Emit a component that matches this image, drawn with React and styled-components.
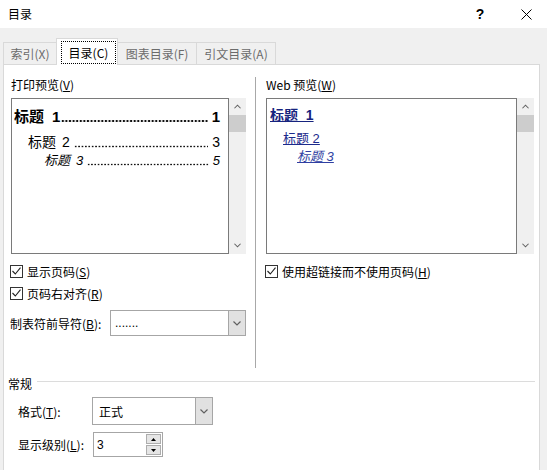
import React from "react";
import styled, { createGlobalStyle } from "styled-components";

const GlobalStyle = createGlobalStyle`
  html, body {
    margin: 0;
    padding: 0;
    background: #f0f0f0;
  }
  body {
    font-family: "Noto Sans CJK SC", "Liberation Sans", sans-serif;
    font-size: 12px;
    color: #000;
  }
`;

const Window = styled.div`
  width: 547px;
  height: 470px;
  overflow: hidden;
  background: #f0f0f0;
`;

const TitleBar = styled.div`
  height: 28px;
  background: #fff;
  display: flex;
  align-items: center;
  padding-left: 8px;
`;

const TitleText = styled.span`
  flex: 1;
  font-size: 12px;
  line-height: 16px;
`;

const TitleButton = styled.div`
  width: 40px;
  height: 28px;
  display: flex;
  align-items: center;
  justify-content: center;
  font-family: "Liberation Sans", sans-serif;
  font-weight: 700;
  font-size: 14px;
  margin-right: ${(p) => p.$gap || 0}px;
`;

const TabStrip = styled.div`
  height: 36px;
  display: flex;
  align-items: flex-end;
  padding-left: 3px;
`;

const Tab = styled.div`
  position: relative;
  z-index: ${(p) => (p.$active ? 2 : 1)};
  width: ${(p) => p.$w}px;
  height: ${(p) => (p.$active ? 27 : 22)}px;
  margin-left: -1px;
  margin-bottom: ${(p) => (p.$active ? -1 : 0)}px;
  box-sizing: border-box;
  border: 1px solid #d9d9d9;
  border-bottom: none;
  background: ${(p) => (p.$active ? "#fff" : "#f0f0f0")};
  color: ${(p) => (p.$active ? "#000" : "#6b6b6b")};
  display: flex;
  align-items: center;
  justify-content: center;
  padding: ${(p) => (p.$active ? "2px 1px 1px 4px" : "0")};
  &:first-child {
    margin-left: 0;
  }
`;

const FocusBox = styled.div`
  flex: 1;
  align-self: stretch;
  display: flex;
  align-items: center;
  justify-content: center;
  border: 1px dotted #000;
`;

const Panel = styled.div`
  margin-left: 3px;
  width: 537px;
  height: 420px;
  box-sizing: border-box;
  border: 1px solid #d9d9d9;
  background: #fff;
`;

const TopRow = styled.div`
  display: flex;
  padding: 12px 0 0 7px;
`;

const Column = styled.div`
  width: ${(p) => p.$w}px;
  margin-left: ${(p) => p.$ml || 0}px;
  display: flex;
  flex-direction: column;
`;

const Label = styled.div`
  height: 16px;
  line-height: 16px;
  margin-bottom: 5px;
  white-space: nowrap;
`;

const VDivider = styled.div`
  margin-left: 9px;
  width: 1px;
  height: 291px;
  background: #a8a8a8;
`;

const PreviewFrame = styled.div`
  display: flex;
  height: 156px;
`;

const ListBox = styled.div`
  width: ${(p) => p.$w}px;
  box-sizing: border-box;
  border: 1px solid #7a7a7a;
  background: #fff;
  padding: ${(p) => p.$pad};
  overflow: hidden;
`;

const ScrollTrack = styled.div`
  width: 17px;
  background: #f0f0f0;
  display: flex;
  flex-direction: column;
`;

const ScrollArrow = styled.div`
  height: 17px;
  display: flex;
  align-items: center;
  justify-content: center;
`;

const ScrollThumb = styled.div`
  height: 17px;
  background: #cdcdcd;
`;

const ScrollRest = styled.div`
  flex: 1;
`;

const TocLine = styled.div`
  display: flex;
  align-items: center;
  padding-left: ${(p) => p.$indent}px;
  margin-top: ${(p) => p.$mt || 0}px;
  height: ${(p) => p.$h}px;
  line-height: ${(p) => p.$h}px;
  font-size: ${(p) => p.$size}px;
  font-weight: ${(p) => (p.$bold ? 700 : 400)};
  font-style: ${(p) => (p.$italic ? "italic" : "normal")};
  font-family: "Liberation Sans", "Noto Sans CJK SC", sans-serif;
  white-space: nowrap;
`;

const HeadNum = styled.span`
  margin-left: ${(p) => p.$gap}px;
`;

const Leader = styled.span`
  flex: 1;
  align-self: flex-end;
  height: ${(p) => p.$dot * 2}px;
  margin: 0 4px ${(p) => p.$base}px ${(p) => p.$gap}px;
  background-image: radial-gradient(
    circle at center,
    #111 ${(p) => p.$dot * 0.55}px,
    transparent ${(p) => p.$dot * 0.75}px
  );
  background-size: ${(p) => p.$step}px ${(p) => p.$dot * 2}px;
  background-repeat: repeat-x;
`;

const WebLink = styled.div`
  padding-left: ${(p) => p.$indent}px;
  margin-top: ${(p) => p.$mt || 0}px;
  height: ${(p) => p.$h}px;
  line-height: ${(p) => p.$h}px;
  font-size: ${(p) => p.$size}px;
  font-weight: ${(p) => (p.$bold ? 700 : 400)};
  font-style: ${(p) => (p.$italic ? "italic" : "normal")};
  font-family: "Liberation Sans", "Noto Sans CJK SC", sans-serif;
  color: ${(p) => p.$color};
  text-decoration: underline;
  white-space: nowrap;
`;

const CheckRow = styled.div`
  display: flex;
  align-items: center;
  height: 18px;
  margin-top: ${(p) => p.$mt}px;
  margin-left: -1px;
  white-space: nowrap;
`;

const CheckBox = styled.span`
  width: 13px;
  height: 13px;
  box-sizing: border-box;
  border: 1px solid #333;
  background: #fff;
  margin-right: 4px;
  display: flex;
  align-items: center;
  justify-content: center;
`;

const FieldRow = styled.div`
  display: flex;
  align-items: center;
  margin-top: ${(p) => p.$mt}px;
  margin-left: ${(p) => p.$ml || 0}px;
  white-space: nowrap;
`;

const FieldLabel = styled.span`
  width: ${(p) => p.$w}px;
  flex-shrink: 0;
`;

const Combo = styled.div`
  width: ${(p) => p.$w}px;
  height: ${(p) => p.$h}px;
  box-sizing: border-box;
  border: 1px solid #a6a6a6;
  background: #fff;
  display: flex;
`;

const ComboValue = styled.div`
  flex: 1;
  display: flex;
  align-items: center;
  padding-left: ${(p) => p.$pl || 4}px;
  font-family: "Liberation Sans", "Noto Sans CJK SC", sans-serif;
  font-size: ${(p) => p.$size || 12}px;
`;

const ComboButton = styled.div`
  width: 17px;
  box-sizing: border-box;
  border-left: 1px solid #a6a6a6;
  background: #e1e1e1;
  display: flex;
  align-items: center;
  justify-content: center;
`;

const SpinButtons = styled.div`
  width: 15px;
  display: flex;
  flex-direction: column;
  padding: 1px 1px 1px 0;
  gap: 1px;
`;

const SpinButton = styled.div`
  flex: 1;
  box-sizing: border-box;
  border: 1px solid #adadad;
  background: #e5e5e5;
  display: flex;
  align-items: center;
  justify-content: center;
`;

const GroupHeader = styled.div`
  display: flex;
  align-items: center;
  height: 16px;
  margin-top: 7px;
  padding-left: 4px;
`;

const GroupLine = styled.div`
  flex: 1;
  height: 1px;
  background: #dcdcdc;
  margin: -3px 4px 0 5px;
`;

const Chevron = ({ up, color = "#606060", w = 8 }) => (
  <svg width={w} height="5" viewBox="0 0 8 5">
    <path
      d={up ? "M0.5 4.5 L4 1 L7.5 4.5" : "M0.5 0.5 L4 4 L7.5 0.5"}
      fill="none"
      stroke={color}
      strokeWidth="1.2"
    />
  </svg>
);

const Triangle = ({ up }) => (
  <svg width="5" height="3" viewBox="0 0 5 3">
    <path d={up ? "M0 3 L2.5 0 L5 3 Z" : "M0 0 L2.5 3 L5 0 Z"} fill="#000" />
  </svg>
);

const Check = () => (
  <span>
    <CheckBox>
      <svg width="9" height="8" viewBox="0 0 9 8">
        <path d="M0.5 4 L3.3 7 L8.5 0.7" fill="none" stroke="#222" strokeWidth="1.1" />
      </svg>
    </CheckBox>
  </span>
);

const Scrollbar = () => (
  <ScrollTrack>
    <ScrollArrow>
      <Chevron up w={7} />
    </ScrollArrow>
    <ScrollThumb />
    <ScrollRest />
    <ScrollArrow>
      <Chevron w={7} />
    </ScrollArrow>
  </ScrollTrack>
);

export default function App() {
  return (
    <Window>
      <GlobalStyle />
      <TitleBar>
        <TitleText>目录</TitleText>
        <TitleButton $gap={6}>?</TitleButton>
        <TitleButton $gap={1}>
          <svg width="11" height="11" viewBox="0 0 11 11">
            <path d="M0.5 0.5 L10.5 10.5 M10.5 0.5 L0.5 10.5" stroke="#000" strokeWidth="1" />
          </svg>
        </TitleButton>
      </TitleBar>

      <TabStrip>
        <Tab $w={54}>索引(X)</Tab>
        <Tab $w={62} $active>
          <FocusBox>目录(C)</FocusBox>
        </Tab>
        <Tab $w={80}>图表目录(F)</Tab>
        <Tab $w={80}>引文目录(A)</Tab>
      </TabStrip>

      <Panel>
        <TopRow>
          <Column $w={235}>
            <Label>
              打印预览(<u>V</u>)
            </Label>
            <PreviewFrame>
              <ListBox $w={218} $pad="8px 8px 0 2px">
                <TocLine $indent={0} $h={20} $size={15} $bold>
                  <span>标题</span>
                  <HeadNum $gap={8}>1</HeadNum>
                  <Leader $gap={1} $dot={2} $step={3.6} $base={4} />
                  <span>1</span>
                </TocLine>
                <TocLine $indent={14} $mt={5} $h={20} $size={14}>
                  <span>标题</span>
                  <HeadNum $gap={6}>2</HeadNum>
                  <Leader $gap={4} $dot={1.6} $step={3.4} $base={4} />
                  <span>3</span>
                </TocLine>
                <TocLine $indent={30} $h={18} $size={13} $italic>
                  <span>标题</span>
                  <HeadNum $gap={6}>3</HeadNum>
                  <Leader $gap={4} $dot={1.5} $step={3.3} $base={4} />
                  <span>5</span>
                </TocLine>
              </ListBox>
              <Scrollbar />
            </PreviewFrame>
            <CheckRow $mt={8}>
              <Check />
              显示页码(<u>S</u>)
            </CheckRow>
            <CheckRow $mt={4}>
              <Check />
              页码右对齐(<u>R</u>)
            </CheckRow>
            <FieldRow $mt={8} $ml={-1}>
              <FieldLabel $w={100}>
                制表符前导符(<u>B</u>):
              </FieldLabel>
              <Combo $w={136} $h={26}>
                <ComboValue $pl={4}>.......</ComboValue>
                <ComboButton>
                  <Chevron />
                </ComboButton>
              </Combo>
            </FieldRow>
          </Column>

          <VDivider />

          <Column $w={268} $ml={10}>
            <Label>
              Web 预览(<u>W</u>)
            </Label>
            <PreviewFrame>
              <ListBox $w={251} $pad="6px 0 0 3px">
                <WebLink $indent={0} $h={20} $size={14} $bold $color="#16237e">
                  标题&nbsp;&nbsp;1
                </WebLink>
                <WebLink $indent={13} $mt={5} $h={18} $size={13} $color="#1c2a8c">
                  标题 2
                </WebLink>
                <WebLink $indent={27} $h={18} $size={13} $italic $color="#2f3fa2">
                  标题 3
                </WebLink>
              </ListBox>
              <Scrollbar />
            </PreviewFrame>
            <CheckRow $mt={8}>
              <Check />
              使用超链接而不使用页码(<u>H</u>)
            </CheckRow>
          </Column>
        </TopRow>

        <GroupHeader>
          <span>常规</span>
          <GroupLine />
        </GroupHeader>

        <FieldRow $mt={6} $ml={14}>
          <FieldLabel $w={74}>
            格式(<u>T</u>):
          </FieldLabel>
          <Combo $w={121} $h={28}>
            <ComboValue $pl={6}>正式</ComboValue>
            <ComboButton>
              <Chevron />
            </ComboButton>
          </Combo>
        </FieldRow>

        <FieldRow $mt={7} $ml={14}>
          <FieldLabel $w={75}>
            显示级别(<u>L</u>):
          </FieldLabel>
          <Combo $w={70} $h={25}>
            <ComboValue $pl={3}>3</ComboValue>
            <SpinButtons>
              <SpinButton>
                <Triangle up />
              </SpinButton>
              <SpinButton>
                <Triangle />
              </SpinButton>
            </SpinButtons>
          </Combo>
        </FieldRow>
      </Panel>
    </Window>
  );
}
